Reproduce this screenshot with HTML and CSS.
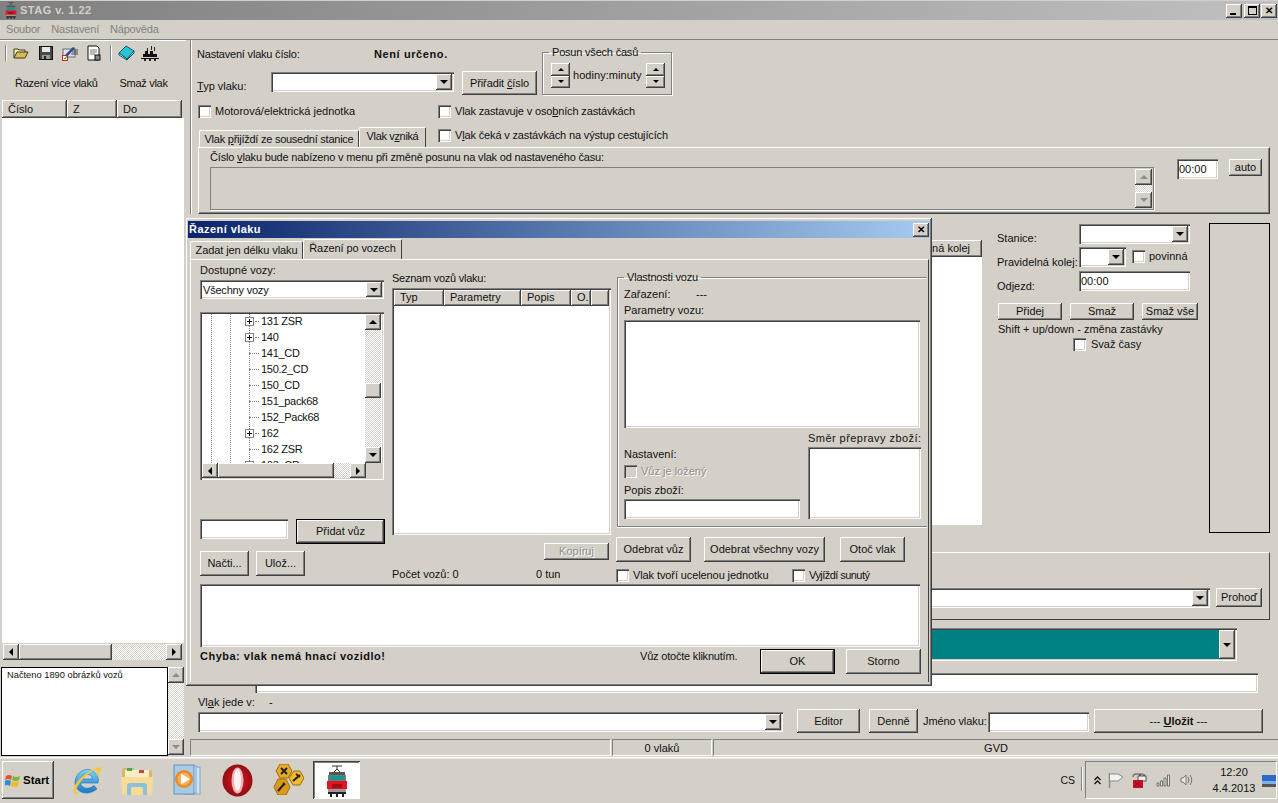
FILE: index.html
```html
<!DOCTYPE html>
<html lang="cs">
<head>
<meta charset="utf-8">
<title>STAG v. 1.22</title>
<link rel="stylesheet" href="styles.css">
</head>
<body>
<svg class="defs" width="0" height="0" aria-hidden="true">
  <symbol id="tram" viewBox="0 0 24 32">
    <path d="M7 1h10M12 1v3M8 8l4-4 4 4" fill="none" stroke="#333" stroke-width="1"/>
    <rect x="4" y="7" width="16" height="3" fill="#555"/>
    <rect x="3" y="10" width="18" height="6" fill="#6b7d7d"/>
    <rect x="5" y="11" width="14" height="4" fill="#0f9a92"/>
    <rect x="2" y="16" width="20" height="8" fill="#e41322"/>
    <rect x="7" y="19" width="10" height="4" fill="#a00c18"/>
    <rect x="3" y="24" width="18" height="3" fill="#9a9a9a"/>
    <path d="M3 27h18v2H3zM5 29h2v3H5zM11 29h2v3h-2zM17 29h2v3h-2z" fill="#222"/>
  </symbol>
</svg>

<div class="app">
  <header class="titlebar">
    <svg class="title-icon" width="14" height="17"><use href="#tram"/></svg>
    <span class="title-text">STAG v. 1.22</span>
    <div class="winbtns">
      <button class="winbtn"><span class="g-min"></span></button>
      <button class="winbtn"><span class="g-max"></span></button>
      <button class="winbtn g-x">✕</button>
    </div>
  </header>
  <nav class="menubar"><span>Soubor</span><span>Nastavení</span><span>Nápověda</span></nav>

  <div class="work">
    <aside class="side">
      <div class="toolbar">
        <span class="tb-sep"></span>
        <svg class="tb-folder" width="16" height="16" viewBox="0 0 16 16"><path d="M1 13V4h4l1 1h6v2" fill="#fff3b0" stroke="#3a3a20"/><path d="M1 13l3-6h11l-3 6z" fill="#d9bb55" stroke="#3a3a20"/></svg>
        <svg class="tb-floppy" width="16" height="16" viewBox="0 0 16 16"><rect x="1.5" y="1.5" width="13" height="13" fill="#4a4a4a" stroke="#111"/><rect x="4" y="2" width="8" height="5" fill="#e8e8e8"/><rect x="4" y="10" width="8" height="4" fill="#9a9a9a"/><rect x="6" y="11" width="2" height="3" fill="#222"/></svg>
        <svg class="tb-edit" width="18" height="16" viewBox="0 0 18 16"><rect x="2" y="4" width="12" height="8" fill="#dfe6f2" stroke="#667"/><path d="M3 11L12 2l2 1-8 9z" fill="#2a4a9a"/><path d="M11 5h6M11 7h6M10 9h7" stroke="#444" stroke-width="1"/><rect x="1.500" y="10.500" width="5" height="5" fill="#fff" stroke="#c22"/><path d="M3 13l1 1 2-3" fill="none" stroke="#282" stroke-width="1"/></svg>
        <svg class="tb-doc" width="15" height="16" viewBox="0 0 15 16"><path d="M2 1h9l2 2v12H2z" fill="#fff" stroke="#111"/><path d="M4 5h7M4 7h7M4 9h5" stroke="#777"/><rect x="9" y="10" width="5" height="5" fill="#888" stroke="#111"/></svg>
        <span class="tb-sep tb-sep2"></span>
        <svg class="tb-book" width="17" height="16" viewBox="0 0 17 16"><path d="M1 8l7-7 8 5-7 8z" fill="#25c5d8" stroke="#156"/><path d="M1 8v2l8 5v-1zM9 14l7-8v2l-7 7z" fill="#e9f8fa" stroke="#156"/></svg>
        <svg class="tb-train" width="18" height="16" viewBox="0 0 18 16"><path d="M2 9h14v3H2zM4 6h3v3H4zM9 6h3v3H9zM0 13h18v1H0z" fill="#111"/><path d="M3 14h2v2H3zM8 14h2v2H8zM13 14h2v2h-2zM10 1h1v4h-1zM13 2h1v4h-1zM6 3h1v3H6z" fill="#222"/></svg>
      </div>
      <div class="tb-actions"><button class="flat act-one">Řazení více vlaků</button><button class="flat act-two">Smaž vlak</button></div>
      <div class="hdr side-hdr"><span class="hcell c65">Číslo</span><span class="hcell c50">Z</span><span class="hcell c65">Do</span></div>
      <div class="side-list"></div>
      <div class="hscroll side-h">
        <span class="sb left"></span><span class="thumb t93"></span><span class="track"></span><span class="sb right"></span>
      </div>
      <div class="logrow">
        <div class="log">Načteno 1890 obrázků vozů</div>
        <div class="vscroll log-v"><span class="sb up off"></span><span class="track"></span><span class="sb down off"></span></div>
      </div>
    </aside>

    <main class="main">
      <section class="top">
        <div class="row-a">
          <div class="a-left">
            <div class="a1"><span class="lab-num">Nastavení vlaku číslo:</span><b class="boldish">Není určeno.</b></div>
            <div class="a2">
              <span class="lab-typ"><u>T</u>yp vlaku:</span>
              <div class="combo combo-typ"><i class="sb down"></i></div>
              <button class="btn btn-assign"><span>Přiřadit <u>č</u>íslo</span></button>
            </div>
          </div>
          <fieldset class="group group-shift">
            <legend>Posun všech časů</legend>
            <div class="shift-row">
              <div class="spin"><span class="sb up"></span><span class="sb down"></span></div>
              <span class="shift-lab">hodiny:minuty</span>
              <div class="spin"><span class="sb up"></span><span class="sb down"></span></div>
            </div>
          </fieldset>
        </div>
        <div class="row-b">
          <label class="chkrow chk-wide"><span class="chk"></span><span>Motorová/elektrická <u>j</u>ednotka</span></label>
          <label class="chkrow chk-stop"><span class="chk"></span><span>Vlak zastavuje v oso<u>b</u>ních zastávkách</span></label>
        </div>
        <div class="row-tabs">
          <span class="tab tab-a"><span>Vlak <u>p</u>řijíždí ze sousední stanice</span></span>
          <span class="tab tab-b on"><span>Vlak v<u>z</u>niká</span></span>
          <label class="chkrow chk-wait"><span class="chk"></span><span>V<u>l</u>ak čeká v zastávkách na výstup cestujících</span></label>
        </div>
        <div class="tabpanel">
          <div class="tp-left">
            <div class="tp-lab">Číslo <u>v</u>laku bude nabízeno v menu při změně posunu na vlak od nastaveného času:</div>
            <div class="memo-off">
              <div class="vscroll memo-v"><span class="sb up off"></span><span class="track"></span><span class="sb down off"></span></div>
            </div>
          </div>
          <div class="field time">00:00</div>
          <button class="btn btn-auto">auto</button>
        </div>
      </section>

      <section class="mid">
        <div class="stops">
          <div class="hdr stops-hdr"><span class="hcell stops-cell">Pravidelná kolej</span></div>
          <div class="stops-body"></div>
        </div>
        <div class="stopform">
          <div class="f-row f1"><span class="f-lab">Stanice:</span><div class="combo combo-st"><i class="sb down"></i></div></div>
          <div class="f-row f2"><span class="f-lab">Pravidelná kolej:</span><div class="combo combo-kolej"><i class="sb down"></i></div>
            <label class="chkrow chk-pov"><span class="chk"></span><span>povinná</span></label></div>
          <div class="f-row f3"><span class="f-lab">Odjezd:</span><div class="field odjezd">00:00</div></div>
          <div class="f-row f4"><button class="btn b-pridej">Přidej</button><button class="btn b-smaz">Smaž</button><button class="btn b-vse">Smaž vše</button></div>
          <div class="f5">Shift + up/down - změna zastávky</div>
          <label class="chkrow f6"><span class="chk"></span><span>Svaž časy</span></label>
        </div>
        <div class="blackbox"></div>
      </section>

      <section class="low">
        <div class="lowpanel">
          <div class="combo combo-low"><i class="sb down"></i></div>
          <button class="btn btn-prohod">Prohoď</button>
        </div>
        <div class="combo combo-teal"><i class="sb down"></i></div>
        <div class="field wide-input"></div>
        <div class="jede-lab"><span class="jede-a">Vl<u>a</u>k jede v:</span><span>-</span></div>
        <div class="jede-row">
          <div class="combo combo-jede"><i class="sb down"></i></div>
          <button class="btn b-editor">Editor</button>
          <button class="btn b-denne">Denně</button>
          <span class="jmeno">Jméno vlaku:</span>
          <div class="field jmeno-in"></div>
          <button class="btn b-ulozit"><span>--- <b><u>U</u>ložit</b> ---</span></button>
        </div>
        <div class="status"><span class="st st1"></span><span class="st st2">0 vlaků</span><span class="st st3">GVD</span></div>
      </section>
    </main>
  </div>

  <footer class="taskbar">
    <button class="start">
      <svg width="16" height="15" viewBox="0 0 16 15"><path d="M1 3q3-2 6 0l-1 4q-3-2-6 0z" fill="#e8502a"/><path d="M8 3q3 2 7 0l-1 4q-3 2-7 0z" fill="#7ab92a"/><path d="M0 8q3-2 6 0l-1 5q-3-2-6 0z" fill="#2f8bd8"/><path d="M7 8q3 2 7 0l-1 5q-3 2-7 0z" fill="#f0bb22"/></svg>
      <span>Start</span>
    </button>
    <svg class="ti ti-ie" width="31" height="33" viewBox="0 0 31 33"><defs><linearGradient id="ieg" x1="0" y1="0" x2="0" y2="1"><stop offset="0" stop-color="#7fd3f7"/><stop offset="1" stop-color="#1c78c8"/></linearGradient></defs><path d="M26 19H8.500c.8 5 7.500 7.500 13.500 2.500l3 3.500C15 33 2.500 28 3 18S14 3 20 6.500 27 15 26 19zM8.500 15h12c0-6-11-7-12 0z" fill="url(#ieg)" stroke="#1a6fb8" stroke-width=".6"/><path d="M2 29C-1 24 8 11 22 5c4-2 8-3 7 1-1 3-3 5-5 6 1-3 2-5 1-6C20 5 6 17 4 27c0 2 1 2 4 1-3 3-5 2-6 1z" fill="#f2c638"/></svg>
    <svg class="ti ti-folder" width="32" height="32" viewBox="0 0 32 32"><path d="M1 6q0-2 2-2h9l2 2h15q2 0 2 2v20q0 2-2 2H3q-2 0-2-2z" fill="#d9b768"/><rect x="4" y="6" width="24" height="8" fill="#f7edc6"/><rect x="6" y="4" width="5" height="3" fill="#4aa84a"/><rect x="18" y="6" width="5" height="3" fill="#c24a3a"/><path d="M0 13h32l-1 16q0 2-2 2H3q-2 0-2-2z" fill="#f6dc97"/><path d="M6 31v-9q0-3 3-3h14q3 0 3 3v9h-4v-6q0-2-2-2h-8q-2 0-2 2v6z" fill="#8cc0dc"/></svg>
    <svg class="ti ti-wmp" width="28" height="32" viewBox="0 0 28 32"><rect x="11" y="3" width="16" height="27" fill="#cfe3f3" stroke="#7aa5c8"/><rect x="7" y="2" width="16" height="27" fill="#dcebf7" stroke="#7aa5c8"/><rect x="1" y="1" width="20" height="29" fill="#a8cbe6" stroke="#5d92bd"/><circle cx="11" cy="15" r="9" fill="#ec8a22"/><circle cx="11" cy="15" r="6.500" fill="#f9b054"/><path d="M8 9.500l9 5.500-9 5.500z" fill="#fff"/></svg>
    <svg class="ti ti-opera" width="31" height="33" viewBox="0 0 31 33"><defs><radialGradient id="opg" cx=".5" cy=".5" r=".55"><stop offset=".3" stop-color="#c8141c"/><stop offset="1" stop-color="#8a0c12"/></radialGradient></defs><ellipse cx="15.500" cy="16.500" rx="15" ry="16" fill="url(#opg)"/><ellipse cx="15.500" cy="16.500" rx="6" ry="13" fill="#e9b8b8"/><ellipse cx="15.500" cy="16" rx="3.500" ry="11" fill="#faf0f0"/></svg>
    <svg class="ti ti-tools" width="32" height="31" viewBox="0 0 32 31"><path d="M8 0h8l4 7-4 7H8L4 7z" fill="#e8a923" stroke="#9a6d10"/><path d="M22 7h6l4 7-4 7h-7l-4-7z" fill="#f0b92e" stroke="#9a6d10"/><path d="M6 15h8l4 8-4 8H6l-4-8z" fill="#dc9a1a" stroke="#9a6d10"/><path d="M9 4l6 6M15 4l-6 6M21 17l7-6M24 10l4 3M6 27l6-7M11 19l2 2" stroke="#222" stroke-width="2"/></svg>
    <button class="task-active"><svg width="24" height="32"><use href="#tram"/></svg></button>

    <span class="lang">CS</span>
    <span class="lang-sep"></span>
    <div class="tray">
      <span class="chev">
        <svg width="7" height="9" viewBox="0 0 7 9"><path d="M.500 4l3-3 3 3M.500 8l3-3 3 3" fill="none" stroke="#111" stroke-width="1.300"/></svg>
      </span>
      <svg class="tr-flag" width="16" height="15" viewBox="0 0 16 15"><path d="M1.500 0v15" stroke="#888" stroke-width="1.500"/><path d="M2 1h8l5 3-5 4H2" fill="#f4f4f0" stroke="#888"/></svg>
      <svg class="tr-plug" width="15" height="15" viewBox="0 0 15 15"><path d="M1 4q0-3 3-3h7" fill="none" stroke="#777" stroke-width="1.500"/><rect x="6" y="3" width="8" height="5" fill="#eee" stroke="#555"/><path d="M8 1v2M12 1v2" stroke="#222"/><rect x="1" y="7" width="10" height="8" fill="#c8102a"/><path d="M3 9l5 4M8 9l-5 4" stroke="#701"/></svg>
      <svg class="tr-sig" width="15" height="13" viewBox="0 0 15 13"><path d="M1 12V9h2v3zM4.500 12V7h2v5zM8 12V4h2v8zM11.500 12V1h2v11z" fill="#e9e9e4" stroke="#666" stroke-width=".9"/></svg>
      <svg class="tr-vol" width="14" height="14" viewBox="0 0 14 14"><path d="M1 5h2l3-3v10L3 9H1z" fill="#e8e8e4" stroke="#777"/><path d="M8 4q2 3 0 6M10 2q3.500 5 0 10" fill="none" stroke="#777"/></svg>
      <div class="clock"><span>12:20</span><span>4.4.2013</span></div>
      <svg class="tr-show" width="14" height="12" viewBox="0 0 14 12"><rect width="14" height="9" fill="#2a6ac8"/><rect y="6" width="14" height="3" fill="#7fb0e8"/><rect y="9" width="14" height="3" fill="#555"/></svg>
    </div>
  </footer>

  <div class="dialog">
    <div class="dlg-title"><span>Řazení vlaku</span><button class="winbtn g-x dlg-x">✕</button></div>
    <div class="dlg-tabs">
      <span class="tab dtab-a">Zadat jen délku vlaku</span>
      <span class="tab dtab-b on">Řazení po vozech</span>
    </div>
    <div class="dlg-page">
      <div class="dlg-cols">
        <div class="col-l">
          <div class="lab">Dostupné vozy:</div>
          <div class="combo combo-vozy"><span class="combo-text">Všechny vozy</span><i class="sb down"></i></div>
          <div class="tree">
            <div class="tree-main">
              <div class="tree-rows">
                <div class="tr"><span class="plus"></span><span class="dash d-s"></span>131 ZSR</div>
                <div class="tr"><span class="plus"></span><span class="dash d-s"></span>140</div>
                <div class="tr leaf"><span class="dash"></span>141_CD</div>
                <div class="tr leaf"><span class="dash"></span>150.2_CD</div>
                <div class="tr leaf"><span class="dash"></span>150_CD</div>
                <div class="tr leaf"><span class="dash"></span>151_pack68</div>
                <div class="tr leaf"><span class="dash"></span>152_Pack68</div>
                <div class="tr"><span class="plus"></span><span class="dash d-s"></span>162</div>
                <div class="tr leaf"><span class="dash"></span>162 ZSR</div>
                <div class="tr"><span class="plus"></span><span class="dash d-s"></span>163_CD</div>
              </div>
              <div class="vscroll tree-v"><span class="sb up"></span><span class="track tr1"></span><span class="thumb t-v"></span><span class="track"></span><span class="sb down"></span></div>
            </div>
            <div class="hscroll tree-h"><span class="sb left"></span><span class="thumb t116"></span><span class="track"></span><span class="sb right"></span><span class="corner"></span></div>
          </div>
          <div class="add-row">
            <div class="field add-in"></div>
            <button class="btn def add-btn">Přidat vůz</button>
          </div>
          <div class="io-row"><button class="btn b-io">Načti...</button><button class="btn b-io b-io2">Ulož...</button></div>
        </div>

        <div class="col-m">
          <div class="lab lab-seznam">Seznam vozů vlaku:</div>
          <div class="wagons">
            <div class="hdr wag-hdr"><span class="hcell w1">Typ</span><span class="hcell w2">Parametry</span><span class="hcell w3">Popis</span><span class="hcell w4">O.</span><span class="hcell w5"></span></div>
          </div>
          <div class="copy-row"><button class="btn disabled b-copy">Kopíruj</button></div>
          <div class="count-row"><span class="count-a">Počet vozů: 0</span><span>0 tun</span></div>
        </div>

        <div class="col-r">
          <fieldset class="group group-wagon">
            <legend>Vlastnosti vozu</legend>
            <div class="zar"><span class="zar-a">Zařazení:</span><span>---</span></div>
            <div class="lab par-lab">Parametry vozu:</div>
            <div class="field par-box"></div>
            <div class="wagon-low">
              <div class="wl-left">
                <div class="lab wl-nast">Nastavení:</div>
                <label class="chkrow wl-chk"><span class="chk chk-off"></span><span class="txt-off">Vůz je ložený</span></label>
                <div class="lab wl-pop">Popis zboží:</div>
                <div class="field wl-in"></div>
              </div>
              <div class="wl-right">
                <div class="lab lab-smer">Směr přepravy zboží:</div>
                <div class="field wl-dir"></div>
              </div>
            </div>
          </fieldset>
          <div class="act-row">
            <button class="btn b-odb">Odebrat vůz</button>
            <button class="btn b-odball">Odebrat všechny vozy</button>
            <button class="btn b-otoc">Otoč vlak</button>
          </div>
          <div class="chk-row">
            <label class="chkrow chk-ucel"><span class="chk"></span><span>Vlak tvoří ucelenou jednotku</span></label>
            <label class="chkrow chk-sun"><span class="chk"></span><span>Vyjíždí sunutý</span></label>
          </div>
        </div>
      </div>
      <div class="field dlg-memo"></div>
      <div class="dlg-foot">
        <b class="err">Chyba: vlak nemá hnací vozidlo!</b>
        <span class="hint">Vůz otočte kliknutím.</span>
        <button class="btn def b-ok">OK</button>
        <button class="btn b-storno">Storno</button>
      </div>
    </div>
  </div>
</div>
</body>
</html>
```

FILE: styles.css
```css
* { box-sizing: border-box; }
html, body { margin: 0; padding: 0; }
body {
  width: 1278px; height: 803px; overflow: hidden;
  background: #d4d0c8; color: #111;
  font: 11px/13px "Liberation Sans", Arial, sans-serif;
}
.defs { position: absolute; }
u { text-underline-offset: 1px; }
button { font: inherit; color: inherit; border: 0; padding: 0; margin: 0; background: none; }
label { display: flex; }

.app { position: relative; width: 1278px; height: 803px; display: flex; flex-direction: column; }

/* shared bevels */
.btn, .sb, .thumb, .winbtn, .hcell, .start {
  background: #d4d0c8;
  box-shadow: inset -1px -1px #404040, inset 1px 1px #fff, inset -2px -2px #808080, inset 2px 2px #d4d0c8;
}
.btn { display: flex; align-items: center; justify-content: center; flex: none; white-space: nowrap; }
.btn.def { outline: 1px solid #000; outline-offset: -1px;
  box-shadow: inset -2px -2px #404040, inset 2px 2px #fff, inset -3px -3px #808080; }
.btn.disabled { color: #8f8d88; text-shadow: 1px 1px #fff; }
.field, .combo {
  background: #fff; flex: none;
  box-shadow: inset 1px 1px #808080, inset 2px 2px #404040, inset -1px -1px #fff, inset -2px -2px #d4d0c8;
}
.field { padding: 3px; }
.combo { display: flex; justify-content: flex-end; align-items: stretch; padding: 2px; height: 20px; }
.combo-text { flex: 1; padding: 2px 1px; letter-spacing: -.2px; }
.sb { display: flex; align-items: center; justify-content: center; flex: 0 0 16px; height: 16px; width: 16px; }
.sb::after { content: ""; border: 4px solid transparent; width: 0; height: 0; }
.sb.up::after { border-bottom: 4px solid #000; border-top-width: 0; }
.sb.down::after { border-top: 4px solid #000; border-bottom-width: 0; }
.sb.left::after { border-right: 4px solid #000; border-left-width: 0; }
.sb.right::after { border-left: 4px solid #000; border-right-width: 0; }
.sb.off.up::after { border-bottom-color: #8f8d88; }
.sb.off.down::after { border-top-color: #8f8d88; }
.combo .sb { flex: 0 0 16px; height: auto; }
.track { flex: 1; background: repeating-conic-gradient(#fff 0 25%, #d4d0c8 0 50%) 0 0 / 2px 2px; }
.hscroll, .vscroll { display: flex; flex: none; }
.vscroll { flex-direction: column; width: 16px; }
.chk {
  display: block; width: 13px; height: 13px; background: #fff; flex: none;
  box-shadow: inset 1px 1px #808080, inset 2px 2px #404040, inset -1px -1px #fff, inset -2px -2px #d4d0c8;
}
.chkrow { gap: 4px; white-space: nowrap; flex: none; }
.group { margin: 0; padding: 0; border: 1px solid #808080; box-shadow: inset 1px 1px #fff, 1px 1px #fff; min-width: 0; }
.group legend { padding: 0 3px; margin-left: 6px; line-height: 13px; letter-spacing: -.2px; }
.hdr { display: flex; flex: none; }
.hcell { display: block; padding: 2px 6px; height: 18px; white-space: nowrap; overflow: hidden; flex: none; }

/* title bar */
.titlebar {
  height: 19px; flex: none; display: flex; align-items: center;
  margin-top: 1px; margin-bottom: -1px;
  background: linear-gradient(90deg, #808080, #c0c0c0);
  padding-left: 4px;
}
.title-icon { flex: none; }
.title-text { margin-left: 2px; font-weight: 700; color: #d4d0c8; letter-spacing: .5px; }
.winbtns { margin-left: auto; display: flex; gap: 1px; padding-right: 1px; }
.winbtn { width: 16px; height: 14px; display: flex; align-items: center; justify-content: center; font-size: 10px; font-weight: 700; color: #000; }
.winbtns .winbtn:nth-child(2) { margin-left: 1px; }
.g-min { width: 6px; height: 2px; background: #000; margin-top: 6px; margin-right: 2px; }
.g-max { width: 9px; height: 9px; border: 1px solid #000; border-top-width: 2px; }
.menubar { height: 20px; flex: none; display: flex; align-items: center; padding-left: 6px; color: #84827c; letter-spacing: -.2px; }
.menubar span:nth-child(2) { margin-left: 11px; }
.menubar span:nth-child(3) { margin-left: 11px; }

.work { flex: 1; display: flex; border-top: 1px solid #808080; min-height: 0; }

/* left side */
.side { width: 186px; flex: none; display: flex; flex-direction: column; border-top: 1px solid #fff; margin-right: 0; }
.toolbar { height: 31px; flex: none; display: flex; align-items: flex-start; padding: 4px 0 0 5px; }
.tb-sep { width: 2px; height: 16px; border-left: 1px solid #808080; border-right: 1px solid #fff; flex: none; }
.tb-sep2 { margin-left: 9px; }
.tb-folder { margin-left: 6px; }
.tb-floppy { margin-left: 9px; }
.tb-edit { margin-left: 7px; }
.tb-doc { margin-left: 7px; }
.tb-book { margin-left: 6px; }
.tb-train { margin-left: 6px; }
.tb-actions { height: 28px; flex: none; display: flex; align-items: center; padding: 0 0 6px 15px; }
.act-one { letter-spacing: -.25px; }
.act-two { margin-left: 22px; letter-spacing: -.3px; }
.side-hdr { padding-left: 2px; }
.side-hdr .hcell { padding-top: 3px; }
.c65 { width: 65px; } .c50 { width: 50px; }
.side-list { flex: 1; background: #fff; margin: 0 2px; }
.side-h { height: 17px; padding: 1px 4px 0 3px; margin-left: 0; background: #d4d0c8; }
.thumb.t93 { width: 93px; }
.logrow { height: 89px; flex: none; margin-top: 7px; margin-bottom: 1px; display: flex; padding-left: 1px; }
.log { width: 167px; border: 1px solid #000; background: #fff; padding: 1px 5px; font-size: 9.3px; }
.log-v { height: 88px; }

/* main area */
.main { flex: 1; min-width: 0; display: flex; flex-direction: column; padding-left: 4px; }
.top { height: 174px; flex: none; border-left: 1px solid #808080; box-shadow: inset 1px 0 #fff; padding-left: 6px; }
.row-a { display: flex; height: 56px; }
.a-left { width: 345px; flex: none; }
.a1 { height: 31px; padding-top: 8px; display: flex; }
.lab-num { width: 177px; letter-spacing: -.2px; }
.boldish { font-weight: 700; letter-spacing: .6px; }
.a2 { display: flex; align-items: flex-start; }
.lab-typ { width: 74px; margin-top: 9px; }
.combo-typ { width: 183px; margin-top: 1px; }
.btn-assign { width: 75px; height: 24px; margin-left: 8px; letter-spacing: -.1px; }
.group-shift { width: 130px; height: 49px; margin-top: 6px; }
.shift-row { display: flex; padding: 4px 0 0 8px; align-items: center; }
.shift-lab { margin: 0 0 0 3px; width: 73px; letter-spacing: .05px; }
.spin { display: flex; flex-direction: column; width: 19px; flex: none; }
.spin .sb { width: 19px; height: 13px; flex: 0 0 12.500px; }
.spin .sb::after { border-width: 3.500px; }
.spin .sb.up::after { border-top-width: 0; }
.spin .sb.down::after { border-bottom-width: 0; }
.row-b { display: flex; margin-top: 9px; height: 13px; padding-left: 1px; }
.chk-wide { width: 240px; }
.chk-stop, .chk-wait { letter-spacing: -.15px; }
.row-tabs { display: flex; height: 20px; margin-top: 9px; padding-left: 2px; }
.tab {
  display: flex; align-items: center; justify-content: center; flex: none;
  border-top: 1px solid #fff; border-left: 1px solid #fff; border-right: 1px solid #404040;
  background: #d4d0c8; white-space: nowrap; border-radius: 2px 2px 0 0;
}
.tab.on { position: relative; padding-bottom: 2px; }
.tab-a { width: 160px; height: 17px; margin-top: 3px; letter-spacing: -.25px; }
.tab-b { width: 67px; height: 20px; letter-spacing: -.35px; }
.chk-wait { margin: 2px 0 0 12px; }
.tabpanel {
  margin: 0 8px 0 1px; height: 67px; display: flex; align-items: flex-start;
  border-top: 1px solid #fff; border-left: 1px solid #fff;
  border-right: 1px solid #404040; border-bottom: 1px solid #404040;
  box-shadow: inset -1px -1px #808080;
  padding-left: 11px;
}
.tp-left { width: 944px; flex: none; padding-top: 3px; }
.tp-lab { white-space: nowrap; letter-spacing: -.18px; }
.memo-off { height: 43px; margin-top: 3px; display: flex; justify-content: flex-end; align-items: flex-start;
  border: 1px solid #808080; box-shadow: 1px 1px #fff; padding-right: 1px; padding-top: 1px; }
.memo-v { width: 17px; height: 39px; }
.memo-v .sb { width: 17px; }
.time { width: 41px; height: 20px; margin: 11px 0 0 23px; padding: 4px 2px; }
.btn-auto { width: 33px; height: 17px; margin: 11px 0 0 11px; }

.mid { height: 338px; flex: none; display: flex; }
.stops { width: 792px; flex: none; margin-top: 26px; height: 285px; display: flex; flex-direction: column; }
.stops-hdr { justify-content: flex-end; }
.stops-cell { width: 300px; height: 17px; padding: 2px 12px 0 0; text-align: right; }
.stops-body { flex: 1; background: #fff; }
.stopform { width: 212px; flex: none; margin-left: 15px; padding-top: 10px; }
.f-row { display: flex; align-items: flex-start; height: 20px; }
.f-lab { width: 82px; flex: none; white-space: nowrap; margin-top: 8px; }
.combo-st { width: 111px; }
.f2 { margin-top: 3px; }
.f2 .f-lab { margin-top: 9px; }
.combo-kolej { width: 47px; }
.chk-pov { margin: 3px 0 0 6px; }
.f3 { margin-top: 4px; }
.f3 .f-lab { margin-top: 9px; }
.odjezd { width: 111px; height: 20px; padding: 4px 2px; }
.f-row.f4 { margin: 12px 0 0 1px; gap: 8px; height: 17px; }
.f4 .btn { height: 17px; }
.b-pridej, .b-smaz { width: 64px; }
.b-vse { width: 56px; }
.f5 { margin: 3px 0 0 1px; white-space: nowrap; }
.f6 { margin: 2px 0 0 76px; gap: 5px; }
.blackbox { width: 61px; flex: none; height: 310px; margin-top: 9px; border: 1px solid #000; }

.low { flex: 1; display: flex; flex-direction: column; min-height: 0; }
.lowpanel {
  height: 68px; flex: none; margin-right: 8px; display: flex; justify-content: flex-end; align-items: flex-start;
  border-top: 1px solid #fff; border-right: 1px solid #404040; border-bottom: 1px solid #404040; border-left: 1px solid #808080;
  padding: 35px 7px 0 0;
}
.combo-low { width: 800px; height: 20px; }
.btn-prohod { width: 46px; height: 19px; margin-left: 6px; }
.combo-teal { margin: 8px 0 0 65px; width: 982px; height: 33px; background: #008080; }
.wide-input { margin: 12px 0 0 65px; width: 1003px; height: 20px; }
.jede-lab { margin: 3px 0 0 8px; height: 13px; display: flex; flex: none; }
.jede-a { width: 71px; }
.jede-row { display: flex; align-items: flex-start; margin-left: 8px; height: 24px; flex: none; }
.combo-jede { width: 585px; margin-top: 3px; }
.b-editor { width: 63px; height: 24px; margin-left: 14px; }
.b-denne { width: 49px; height: 24px; margin-left: 9px; }
.jmeno { width: 65px; margin: 6px 0 0 5px; white-space: nowrap; flex: none; letter-spacing: -.1px; }
.jmeno-in { width: 101px; height: 20px; margin-top: 3px; }
.b-ulozit { width: 169px; height: 24px; margin-left: 5px; }
.status { display: flex; margin-top: 6px; height: 17px; flex: none; }
.st { border-top: 1px solid #808080; border-left: 1px solid #808080; border-bottom: 1px solid #fff; border-right: 1px solid #fff; text-align: center; padding-top: 2px; flex: none; }
.st1 { width: 421px; }
.st2 { width: 100px; margin-left: 1px; }
.st3 { width: 566px; margin-left: 1px; }

/* taskbar */
.taskbar {
  height: 46px; flex: none; display: flex; align-items: flex-start;
  border-top: 1px solid #fff; padding: 3px 0 0 2px; box-shadow: inset 0 1px #e8e6e0;
}
.start { width: 52px; height: 38px; display: flex; align-items: center; padding-left: 3px; gap: 2px; font-weight: 700; font-size: 11.500px; flex: none; color: #000; }
.ti { flex: none; margin-top: 3px; }
.ti-ie { margin-left: 18px; }
.ti-folder { margin-left: 18px; }
.ti-wmp { margin-left: 20px; }
.ti-opera { margin-left: 21px; }
.ti-tools { margin-left: 19px; }
.task-active {
  width: 47px; height: 38px; margin-left: 9px; flex: none; background: #fff;
  display: flex; align-items: center; justify-content: center; padding-top: 1px;
  box-shadow: inset 1px 1px #404040, inset -1px -1px #fff, inset 2px 2px #808080;
}
.lang { margin: 13px 0 0 auto; font-size: 10.500px; flex: none; }
.lang-sep { width: 2px; height: 24px; margin: 6px 0 0 6px; border-left: 1px solid #808080; border-right: 1px solid #fff; flex: none; }
.tray {
  width: 192px; height: 38px; margin: 0 1px 0 2px; flex: none; display: flex; align-items: center; padding-left: 8px;
  border: 1px solid; border-color: #808080 #fff #fff #808080;
}
.chev { display: flex; width: 7px; flex: none; }
.tr-flag { margin-left: 7px; flex: none; }
.tr-plug { margin-left: 8px; flex: none; }
.tr-sig { margin-left: 9px; flex: none; }
.tr-vol { margin-left: 9px; flex: none; }
.clock { width: 54px; margin-left: 13px; flex: none; display: flex; flex-direction: column; align-items: center; gap: 3px; }
.tr-show { margin-left: 1px; margin-top: 2px; flex: none; }

/* dialog window */
.dialog {
  position: absolute; left: 186px; top: 218px; width: 746px; height: 468px;
  background: #d4d0c8; display: flex; flex-direction: column; padding: 3px 3px 2px 2px;
  box-shadow: inset -1px -1px #404040, inset 1px 1px #fff, inset -2px -2px #808080;
}
.dlg-title {
  height: 17px; flex: none; display: flex; align-items: center; justify-content: space-between;
  background: linear-gradient(90deg, #0a246a, #a6caf0); color: #fff; font-weight: 700;
  padding: 0 1px 0 1px; letter-spacing: .45px; margin-right: -1px;
}
.dlg-x { width: 16px; height: 14px; color: #000; letter-spacing: 0; }
.dlg-tabs { height: 20px; flex: none; display: flex; align-items: flex-end; padding-left: 2px; margin-top: 1px; }
.dtab-a { width: 113px; height: 18px; letter-spacing: -.1px; }
.dtab-b { width: 99px; height: 20px; letter-spacing: -.1px; }
.dlg-page { flex: 1; border-top: 1px solid #fff; border-left: 1px solid #fff; border-right: 1px solid #404040; padding-left: 9px; margin: 0 0 2px 2px; }
.dlg-cols { display: flex; height: 322px; }
.lab { white-space: nowrap; }
.lab-seznam { letter-spacing: -.25px; }
.lab-smer { letter-spacing: .45px; }
.col-l { width: 184px; flex: none; padding-top: 4px; }
.combo-vozy { height: 19px; margin-top: 3px; }
.tree { height: 168px; margin-top: 13px; display: flex; flex-direction: column; padding: 2px;
  background: #fff; box-shadow: inset 1px 1px #808080, inset 2px 2px #404040, inset -1px -1px #fff, inset -2px -2px #d4d0c8; }
.tree-main { display: flex; height: 149px; flex: none; }
.tree-rows {
  flex: 1; overflow: hidden; padding-left: 43px; letter-spacing: -.3px;
  background-image:
    repeating-linear-gradient(#808080 0 1px, transparent 1px 2px),
    repeating-linear-gradient(#808080 0 1px, transparent 1px 2px),
    repeating-linear-gradient(#808080 0 1px, transparent 1px 2px);
  background-size: 1px 100%; background-repeat: no-repeat;
  background-position: 9px 0, 28px 0, 47px 0;
}
.tr { height: 16px; padding-bottom: 2px; display: flex; align-items: center; white-space: nowrap; position: relative; }
.plus { width: 9px; height: 9px; border: 1px solid #808080; background: #fff; margin-right: 0; flex: none; position: relative; }
.plus::before { content: ""; position: absolute; left: 1px; top: 3px; width: 5px; height: 1px; background: #000; }
.plus::after { content: ""; position: absolute; left: 3px; top: 1px; width: 1px; height: 5px; background: #000; }
.dash { border-top: 1px dotted #808080; flex: none; }
.d-s { width: 4px; margin-left: 1px; margin-right: 2px; }
.leaf .dash { width: 10px; margin-left: 4px; margin-right: 2px; }
.tree-v { height: 149px; margin-right: 1px; }
.tr1 { flex: 0 0 53px; }
.thumb { display: block; flex: none; }
.t-v { height: 15px; }
.t116 { width: 116px; }
.tree-h { height: 15px; }
.tree-h .sb { height: 15px; }
.corner { width: 16px; flex: none; background: #d4d0c8; }
.add-row { display: flex; margin-top: 39px; gap: 8px; align-items: flex-start; }
.add-in { width: 88px; height: 20px; }
.add-btn { width: 89px; height: 25px; }
.io-row { display: flex; margin-top: 7px; }
.b-io { width: 49px; height: 25px; }
.b-io2 { margin-left: 7px; }
.col-m { width: 219px; flex: none; margin-left: 8px; padding-top: 12px; }
.wagons { height: 247px; margin-top: 3px; background: #fff; padding: 2px;
  box-shadow: inset 1px 1px #808080, inset 2px 2px #404040, inset -1px -1px #fff, inset -2px -2px #d4d0c8; }
.wag-hdr .hcell { height: 16px; padding-top: 1px; }
.w1 { width: 50px; } .w2 { width: 77px; } .w3 { width: 50px; } .w4 { width: 20px; } .w5 { width: 18px; }
.copy-row { display: flex; justify-content: flex-end; margin-top: 8px; padding-right: 2px; }
.b-copy { width: 65px; height: 17px; }
.count-row { display: flex; margin-top: 8px; }
.count-a { width: 144px; }
.col-r { width: 311px; flex: none; margin-left: 5px; padding-top: 11px; }
.group-wagon { height: 256px; padding-left: 6px; border-right: 0; box-shadow: inset 1px 1px #fff, 0 1px #fff; margin-left: 1px; }
.group-wagon legend { margin-left: 0; }
.zar { display: flex; padding-top: 4px; }
.zar-a { width: 72px; }
.par-lab { margin-top: 3px; }
.par-box { width: 296px; height: 108px; margin-top: 3px; }
.wagon-low { display: flex; gap: 8px; align-items: flex-start; }
.wl-left { width: 176px; flex: none; padding-top: 20px; }
.wl-chk { margin-top: 4px; }
.chk-off { background: #d4d0c8; }
.txt-off { color: #8f8d88; text-shadow: 1px 1px #fff; }
.wl-pop { margin-top: 6px; }
.wl-in { height: 20px; margin-top: 2px; }
.wl-right { width: 113px; flex: none; padding-top: 4px; }
.wl-dir { height: 72px; margin-top: 2px; }
.act-row { display: flex; margin-top: 10px; }
.act-row .btn { height: 25px; }
.b-odb { width: 75px; }
.b-odball { width: 121px; margin-left: 13px; }
.b-otoc { width: 65px; margin-left: 15px; }
.chk-row { display: flex; margin-top: 7px; }
.chk-ucel { width: 176px; letter-spacing: -.1px; }
.chk-sun { letter-spacing: -.55px; }
.dlg-memo { width: 720px; height: 63px; margin-top: 2px; }
.dlg-foot { display: flex; align-items: flex-start; }
.err { width: 440px; margin-top: 3px; font-weight: 700; letter-spacing: .5px; flex: none; }
.hint { width: 120px; margin-top: 3px; flex: none; white-space: nowrap; letter-spacing: -.2px; }
.b-ok, .b-storno { width: 75px; height: 25px; margin-top: 2px; }
.b-storno { margin-left: 11px; }
```
